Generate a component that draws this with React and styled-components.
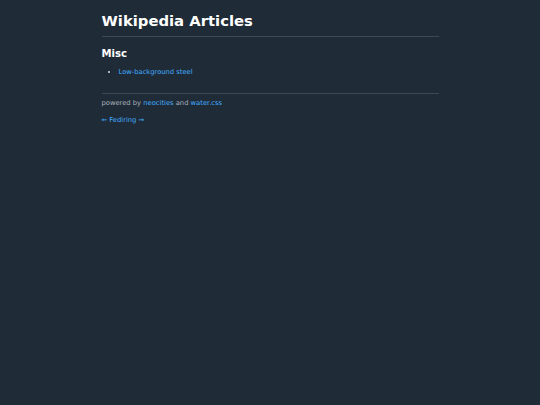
import styled, { createGlobalStyle } from "styled-components";

const GlobalStyle = createGlobalStyle`
  html, body {
    margin: 0;
    padding: 0;
    background: #202b38;
  }
  body {
    font-family: "DejaVu Sans", sans-serif;
    color: #dbdbdb;
  }
`

const Page = styled.div`
  width: 337px;
  margin: 0 auto;
  padding-top: 12px;
  font-size: 6.75px;
  line-height: 9.5px;
`

const Title = styled.h1`
  margin: 0;
  font-size: 14.8px;
  line-height: 18px;
  font-weight: bold;
  color: #ffffff;
`

const Rule = styled.hr`
  border: none;
  border-top: 1px solid #3b4a5b;
  margin: ${(p) => p.$space};
`

const Heading = styled.h2`
  margin: 0;
  font-size: 10.1px;
  line-height: 12px;
  font-weight: bold;
  color: #ffffff;
`

const List = styled.ul`
  margin: 8px 0 0;
  padding-left: 17px;
  list-style: disc;
`

const Link = styled.a`
  color: #41adff;
  text-decoration: none;
`

const Footer = styled.footer`
  color: #a9b1ba;
`

const Line = styled.p`
  margin: ${(p) => p.$space};
`

const App = () => {
  return (
    <>
      <GlobalStyle />
      <Page>
        <Title>Wikipedia Articles</Title>
        <Rule $space="6px 0 11px" />
        <Heading>Misc</Heading>
        <List>
          <li>
            <Link href="#">Low-background steel</Link>
          </li>
        </List>
        <Rule $space="15.5px 0 4.5px" />
        <Footer>
          <Line $space="0">
            powered by <Link href="#">neocities</Link> and <Link href="#">water.css</Link>
          </Line>
          <Line $space="7.5px 0 0">
            <Link href="#">← Fediring →</Link>
          </Line>
        </Footer>
      </Page>
    </>
  )
}

export default App;
